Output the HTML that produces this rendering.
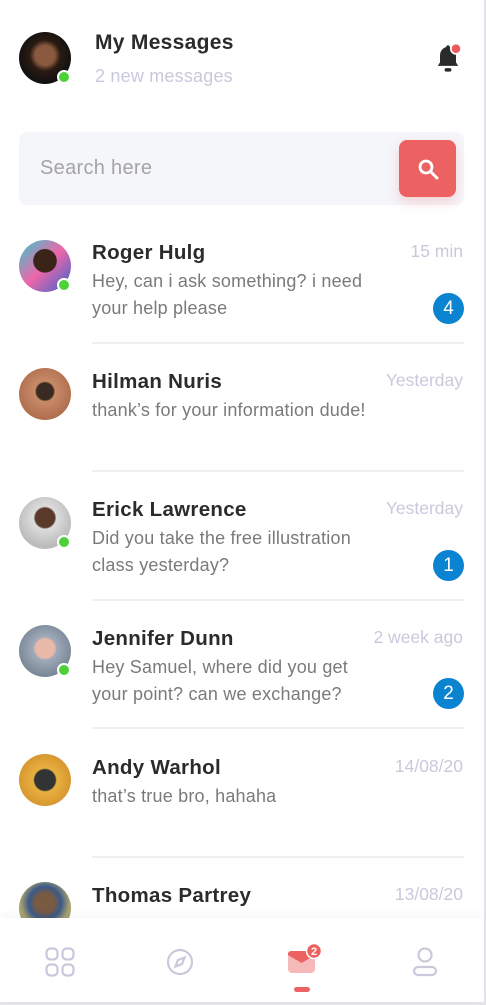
<!DOCTYPE html>
<html><head><meta charset="utf-8"><style>
*{margin:0;padding:0;box-sizing:border-box}
body{width:486px;height:1005px;overflow:hidden;background:#fff;font-family:"Liberation Sans",sans-serif;position:relative}
.a{position:absolute}
.av{position:absolute;left:19px;width:52px;height:52px;border-radius:50%}
.dot{position:absolute;width:14px;height:14px;border-radius:50%;background:#4cd137;border:2px solid #fff}
.nm{position:absolute;left:92px;font-size:20.5px;font-weight:bold;color:#2b2b2b;letter-spacing:0.3px}
.tm{position:absolute;right:23px;font-size:17.5px;color:#c9c9dc}
.ms{position:absolute;left:92px;font-size:18px;color:#7a7a7a;line-height:27px;white-space:nowrap;letter-spacing:0.2px}
.bd{position:absolute;left:433px;width:31px;height:31px;border-radius:50%;background:#0a84d0;color:#fff;font-size:19px;text-align:center;line-height:31px}
.sep{position:absolute;left:92px;width:372px;height:2px;background:#efeff2}
</style></head><body>
<div class="a" style="right:0;top:0;width:2px;height:1005px;background:#e4e4e8"></div>
<div class="a" style="left:0;bottom:0;width:486px;height:3px;background:#e4e4e8"></div>

<div class="av" style="top:32px;background:radial-gradient(circle at 50% 45%,#8a5a40 0 25%,#2a1a12 40%,#111 70%)"></div>
<div class="dot" style="left:57px;top:70px"></div>
<div class="nm" style="left:95px;top:31px;font-size:21px">My Messages</div>
<div class="a" style="left:95px;top:66px;font-size:18px;color:#c9c9dc;letter-spacing:0.2px">2 new messages</div>
<svg class="a" style="left:434px;top:43px" width="28" height="32" viewBox="0 0 24 28"><path d="M12 2c-1 0-1.5.7-1.5 1.5C7 4.5 5 7.5 5 11v6l-2 3h18l-2-3v-6c0-3.5-2-6.5-5.5-7.5C13.5 2.7 13 2 12 2z" fill="#2b2b2b"/><rect x="9" y="22" width="6" height="3" rx="1.5" fill="#2b2b2b"/><circle cx="19" cy="5" r="4.5" fill="#ea5a5a" stroke="#fff" stroke-width="1.5"/></svg>

<div class="a" style="left:19px;top:132px;width:445px;height:73px;border-radius:8px;background:#f5f6fa"></div>
<div class="a" style="left:40px;top:157px;font-size:20px;color:#a4a4a4;letter-spacing:0.3px">Search here</div>
<div class="a" style="left:399px;top:140px;width:57px;height:57px;border-radius:8px;background:#ec6262;box-shadow:0 5px 12px rgba(236,98,98,.25)"></div>
<svg class="a" style="left:415px;top:156px" width="26" height="26" viewBox="0 0 26 26"><circle cx="11" cy="11" r="6" fill="none" stroke="#fff" stroke-width="2.8"/><path d="M15.5 15.5L22 22" stroke="#fff" stroke-width="3" stroke-linecap="round"/></svg>

<div class="av" style="top:240px;background:radial-gradient(circle at 50% 40%,#3a2418 0 28%,transparent 30%),linear-gradient(135deg,#3cc 0,#e6a 50%,#36c 100%)"></div>
<div class="dot" style="left:57px;top:278px"></div>
<div class="nm" style="top:241px">Roger Hulg</div>
<div class="tm" style="top:241px">15 min</div>
<div class="ms" style="top:268px">Hey, can i ask something? i need<br>your help please</div>
<div class="bd" style="top:293px">4</div>
<div class="sep" style="top:342px"></div>

<div class="av" style="top:368px;background:radial-gradient(circle at 50% 45%,#3a2a22 0 22%,#c88a68 26%,#b07050 70%)"></div>
<div class="nm" style="top:370px">Hilman Nuris</div>
<div class="tm" style="top:370px">Yesterday</div>
<div class="ms" style="top:397px">thank’s for your information dude!</div>
<div class="sep" style="top:470px"></div>

<div class="av" style="top:497px;background:radial-gradient(circle at 50% 40%,#5a3a2a 0 24%,#ddd 28%,#bbb 70%)"></div>
<div class="dot" style="left:57px;top:535px"></div>
<div class="nm" style="top:498px">Erick Lawrence</div>
<div class="tm" style="top:498px">Yesterday</div>
<div class="ms" style="top:525px">Did you take the free illustration<br>class yesterday?</div>
<div class="bd" style="top:550px">1</div>
<div class="sep" style="top:599px"></div>

<div class="av" style="top:625px;background:radial-gradient(circle at 50% 45%,#e8b8a8 0 25%,#a0aab8 30%,#7a8898 70%)"></div>
<div class="dot" style="left:57px;top:663px"></div>
<div class="nm" style="top:627px">Jennifer Dunn</div>
<div class="tm" style="top:627px">2 week ago</div>
<div class="ms" style="top:654px">Hey Samuel, where did you get<br>your point? can we exchange?</div>
<div class="bd" style="top:678px">2</div>
<div class="sep" style="top:727px"></div>

<div class="av" style="top:754px;background:radial-gradient(circle at 50% 50%,#333 0 28%,#e8b040 32%,#d89830 70%)"></div>
<div class="nm" style="top:756px">Andy Warhol</div>
<div class="tm" style="top:756px">14/08/20</div>
<div class="ms" style="top:783px">that’s true bro, hahaha</div>
<div class="sep" style="top:856px"></div>

<div class="av" style="top:882px;background:radial-gradient(circle at 50% 40%,#7a5a40 0 22%,#3a5a88 40%,#a8a070 60%)"></div>
<div class="nm" style="top:884px">Thomas Partrey</div>
<div class="tm" style="top:884px">13/08/20</div>

<div class="a" style="left:0;top:918px;width:484px;height:84px;background:#fff;box-shadow:0 -4px 8px rgba(0,0,0,.03)"></div>
<svg class="a" style="left:45px;top:947px" width="30" height="30" viewBox="0 0 30 30" fill="none" stroke="#c9c9dc" stroke-width="2.2"><rect x="1.5" y="1.5" width="11" height="11" rx="4"/><rect x="17.5" y="1.5" width="11" height="11" rx="4"/><rect x="1.5" y="17.5" width="11" height="11" rx="4"/><rect x="17.5" y="17.5" width="11" height="11" rx="4"/></svg>
<svg class="a" style="left:166px;top:948px" width="28" height="28" viewBox="0 0 28 28" fill="none" stroke="#c9c9dc" stroke-width="2.2"><circle cx="14" cy="14" r="12"/><path d="M18.5 9.5l-2.5 6.5-6.5 2.5 2.5-6.5z"/></svg>
<svg class="a" style="left:288px;top:943px" width="40" height="34" viewBox="0 0 40 34"><rect x="0" y="8" width="27" height="22" rx="4" fill="#f6b9b9"/><path d="M0 12l13.5 8L27 12V11c0-2-1.5-3-3.5-3h-20C1.5 8 0 9 0 11z" fill="#ec6262"/><circle cx="26" cy="8" r="7.5" fill="#ec6262" stroke="#fff" stroke-width="1.5"/><text x="26" y="12" font-size="11" font-family="Liberation Sans" font-weight="bold" fill="#fff" text-anchor="middle">2</text></svg>
<div class="a" style="left:294px;top:987px;width:16px;height:5px;border-radius:3px;background:#ec6262"></div>
<svg class="a" style="left:412px;top:947px" width="26" height="30" viewBox="0 0 26 30" fill="none" stroke="#c9c9dc" stroke-width="2.2"><circle cx="13" cy="8" r="6.5"/><rect x="2" y="20" width="22" height="8" rx="4"/></svg>
</body></html>
